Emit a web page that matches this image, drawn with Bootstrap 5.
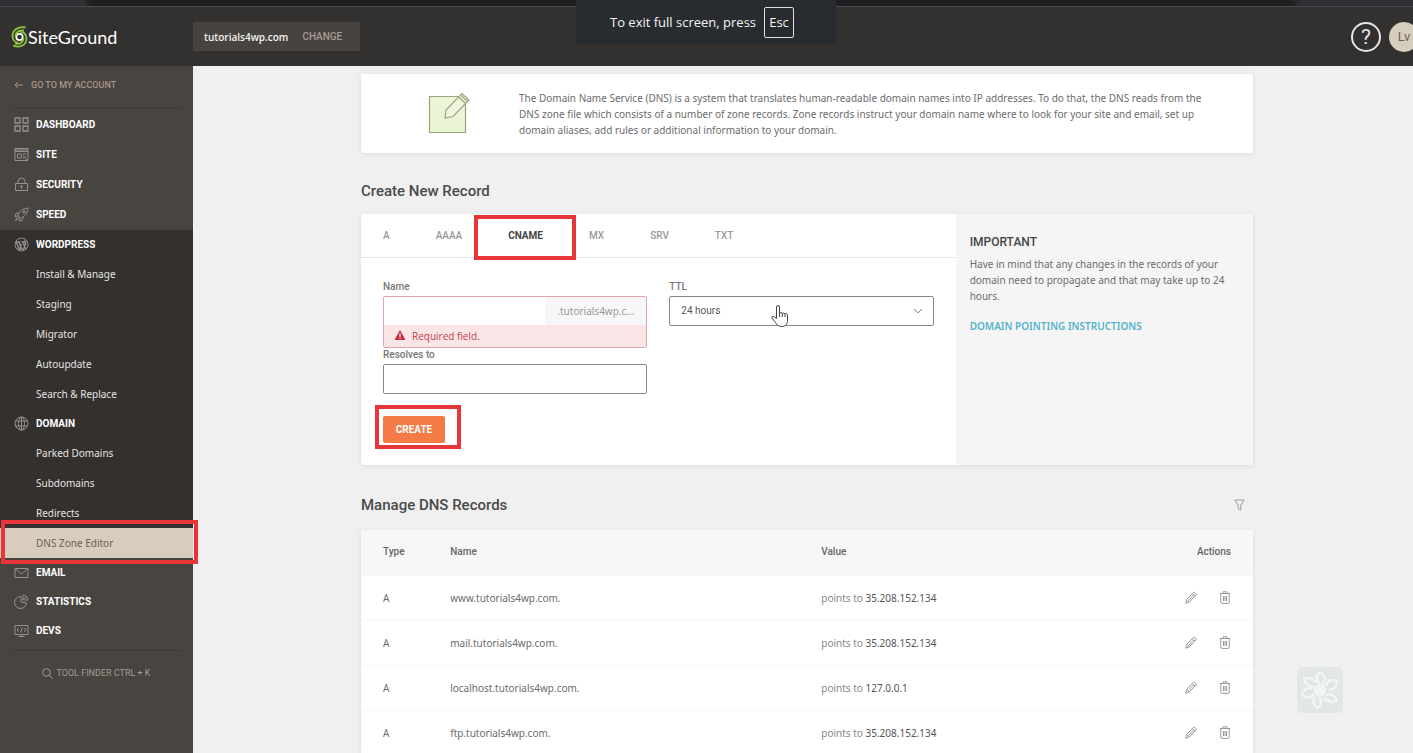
<!DOCTYPE html>
<html lang="en">
<head>
<meta charset="utf-8">
<meta name="viewport" content="width=device-width, initial-scale=1">
<title>DNS Zone Editor</title>
<link href="https://cdn.jsdelivr.net/npm/bootstrap@5.3.0/dist/css/bootstrap.min.css" rel="stylesheet">
<style>
  :root { --ui: Roboto, "Liberation Sans", sans-serif; --copy: "Noto Sans", "Open Sans", sans-serif; --mark-red: #e8353a; }
  body { font: 400 10px/16px var(--copy); color: #6c6c6c; background: #f0f0f0; }
  a { text-decoration: none; }
  svg { display: block; flex: none; fill: none; stroke: currentColor; }
  .strip { height: 7px; background: linear-gradient(90deg, #303135 0 84px, #1e1f20 90px calc(100% - 122px), #303135 calc(100% - 112px)); border-bottom: 1px solid #4b4b4d; }
  .topbar { height: 59px; background: #33312f; }
  .side { width: 193px; background: #484440; }
  .brand { width: 193px; padding-left: 11px; color: #fff; font: 400 18px/24px Lato, sans-serif; }
  .site-pick { height: 29px; padding: 0 18px 0 11px; gap: 14px; background: #474340; color: #f5f3f1; font: 600 10px/16px "Open Sans", sans-serif; }
  .site-pick button { font: 500 10px/16px var(--ui); color: #a39b95; }
  .help { width: 30px; height: 30px; border: 2px solid #e8e6e4; color: #e8e6e4; font: 400 21px/26px var(--ui); }
  .avatar { width: 30px; height: 30px; margin-right: -6px; background: #d6cdbd; color: #6b6257; font: 400 13px/30px var(--ui); }
  .toast-esc { top: 0; left: 576px; width: 260px; height: 44px; padding-right: 8px; background: #282c30; color: #f3f4f5; font: 400 13px/20px "Open Sans", sans-serif; z-index: 20; }
  .toast-esc kbd { width: 30px; height: 31px; border: 1px solid #dfe1e3; border-radius: 2px; background: none; padding: 0; font: 400 13px/29px "Open Sans", sans-serif; color: inherit; }
  .back { height: 37px; padding-left: 14px; color: #a8958c; font: 500 9px/36px var(--ui); }
  .rule { height: 1px; margin: 5px 12px 1px; background: #3e3a37; }
  .head { height: 29px; padding-left: 14px; gap: 7px; color: #fff; font: 700 10px/29px var(--ui); }
  .head svg { color: #98908a; }
  .head-group { gap: 1px; padding-bottom: 1px; }
  .open-group { background: #33302e; }
  .sub { height: 30px; padding-left: 36px; color: #e6e3e0; font: 400 10px/30px var(--copy); }
  .sub.current { background: #d8cdbc; color: #6a6055; position: relative; }
  .callout::after { content: ""; position: absolute; border: 4px solid var(--mark-red); z-index: 5; pointer-events: none; }
  .sub.current::after { inset: -8px -5px -6px 1px; }
  .finder { color: #a39b94; font: 400 9px/16px var(--ui); gap: 3px; padding-top: 13px; }
  .pane { padding: 8px 0 0 8px; scrollbar-width: none; }
  .wrap { max-width: 892px; margin: 0 auto; }
  .panel { background: #fff; border-radius: 2px; box-shadow: 0 1px 6px rgba(0,0,0,.08); }
  .intro { height: 79px; padding: 0 30px 0 66px; gap: 48px; }
  h2 { font: 500 15px/20px var(--ui); color: #4a4a4a; margin: 0; }
  .title-create { margin: 28px 0 13px; }
  .title-manage { margin: 30px 0 15px; }
  .tabs { height: 44px; border-bottom: 1px solid #e6e6e6; }
  .tabs button { border: 0; background: none; padding: 0 23px; font: 500 10px/43px var(--ui); color: #999; position: relative; }
  .tabs button:first-child { padding-left: 22px; }
  .tabs .active { color: #444; font-weight: 700; }
  .tabs .active::after { inset: 1px -10px -3px -11px; }
  .fields { padding: 22px; }
  .fields .row { --bs-gutter-x: 22px; }
  .fields label { display: block; height: 16px; font: 500 10px/13px var(--ui); color: #777; }
  .box { height: 30px; border: 1px solid #888; border-radius: 2px; font: 400 10px/16px var(--ui); color: #555; background-color: #fff; }
  .box.form-select { padding: 0 11px; background-image: url("data:image/svg+xml,%3csvg xmlns='http://www.w3.org/2000/svg' viewBox='0 0 16 16'%3e%3cpath fill='none' stroke='%23777' stroke-width='1.6' d='M2 5l6 6 6-6'/%3e%3c/svg%3e"); background-size: 10px; background-position: right 10px center; }
  .invalid-box { height: 52px; border: 1px solid #e0a5a8; border-radius: 2px; overflow: hidden; }
  .invalid-box input { height: 28px; border: 0; min-width: 0; outline: 0; }
  .suffix { width: 101px; padding-left: 12px; background: #f7f7f7; color: #999; font: 400 10px/28px var(--copy); }
  .error { height: 23px; padding-left: 10px; gap: 6px; background: #fbe6e7; color: #c43d50; font: 400 10px/22px "Open Sans", sans-serif; }
  .create { margin-top: 22px; width: 62px; height: 27px; border: 0; border-radius: 2px; background: #f47b45; color: #fff; font: 700 10px/27px var(--ui); position: relative; padding: 0; }
  .create::after { inset: -11px -16px -6px -8px; }
  .note { background: #f5f5f5; padding: 20px 14px; }
  .note h3 { font: 500 12px/16px var(--ui); color: #444; margin: 0 0 6px; }
  .note p { margin: 0 0 14px; }
  .note a { color: #55b3cb; font: 600 10px/16px var(--copy); }
  .pointer { position: absolute; left: 112px; top: 24px; z-index: 3; }
  .records { font: inherit; width: 100%; table-layout: fixed; }
  .records th { height: 45px; padding: 0; background: #f7f7f7; font: 500 10px/16px var(--ui); color: #666; }
  .records td { height: 45px; padding: 0; border-top: 1px solid #f6f6f6; }
  .records tr > :first-child { padding-left: 22px; width: 10%; }
  .records tr > :nth-child(2) { width: 41.6%; }
  .records tr > :last-child { padding-right: 22px; }
  .records td:nth-child(3) { color: #888; }
  .records button { border: 0; background: none; padding: 0; color: #999; }
  .records b { font-weight: 400; color: #555; }
  .actions { gap: 22px; }
  .stamp { right: 70px; bottom: 40px; width: 46px; height: 46px; border-radius: 5px; background: #e2e6e5; color: #f3f5f5; }
</style>
</head>
<body class="vh-100 overflow-hidden d-flex flex-column position-relative">
<div class="strip flex-shrink-0"></div>
<header class="topbar d-flex align-items-center flex-shrink-0">
  <a href="#" class="brand d-flex align-items-center">
    <svg width="17" height="22" viewBox="0 0 17 22"><circle cx="8.500" cy="11" r="3.200" stroke="#fff" stroke-width="1.800"/><path d="M14.500 1.500C7 0 1.500 4 1.500 10c0 4 2.500 6.500 5.500 6.800M13 4.500C8 4 4.500 6 4.300 10.500M2 19.500c7 3 13.500-.5 13.500-7C15.500 8.500 13 5.500 9 5.800M4 17.600c5 1.400 8.600-1.600 8.600-5.600" stroke="#8cc63f" stroke-width="1.800"/></svg>
    SiteGround</a>
  <div class="site-pick d-flex align-items-center"><span>tutorials4wp.com</span><button class="btn border-0 p-0">CHANGE</button></div>
  <div class="ms-auto d-flex gap-2">
    <a href="#" class="help rounded-circle text-center" aria-label="Help">?</a>
    <a href="#" class="avatar rounded-circle text-center">Lv</a>
  </div>
</header>
<div class="toast-esc position-absolute d-flex align-items-center justify-content-center gap-2"><span>To exit full screen, press</span><kbd class="text-center">Esc</kbd></div>

<div class="d-flex flex-grow-1 overflow-hidden">
  <nav class="side flex-shrink-0 position-relative z-1">
    <a href="#" class="back d-flex align-items-center"><svg class="me-2" width="9" height="8" viewBox="0 0 9 8"><path d="M9 4H1M4 1L1 4l3 3"/></svg>GO TO MY ACCOUNT</a>
    <div class="rule"></div>
    <div class="head-group d-flex flex-column">
      <a href="#" class="head d-flex align-items-center"><svg width="15" height="15" viewBox="0 0 15 15"><path d="M1 1h5v5H1zM9 1h5v5H9zM1 9h5v5H1zM9 9h5v5H9z" stroke-width="1.300"/></svg>DASHBOARD</a>
      <a href="#" class="head d-flex align-items-center"><svg width="15" height="15" viewBox="0 0 15 15"><path d="M1 1.500h13v12H1zM1 4.500h13M1 3h13M3.500 7h4v4h-4zM9 7h3.500M9 9l4 4M9 12l3-3"/></svg>SITE</a>
      <a href="#" class="head d-flex align-items-center"><svg width="15" height="15" viewBox="0 0 15 15"><path d="M1.500 6.500h12v7h-12zM4 6.500V4.500a3.500 3.500 0 0 1 7 0v2M7.500 9v3"/><circle cx="7.500" cy="9.300" r=".8"/></svg>SECURITY</a>
      <a href="#" class="head d-flex align-items-center"><svg width="15" height="15" viewBox="0 0 15 15"><path d="M4 9C5 4.500 8 1.500 14 1c-.3 6-3.500 9-8 10zM5 6L2 6.500.8 9.500l3-.5M9 10l-.5 3-3 1.200.5-3M3.500 10l-2 3.500 3.500-2"/><circle cx="10" cy="5" r="1.300"/></svg>SPEED</a>
    </div>
    <div class="open-group">
      <a href="#" class="head d-flex align-items-center"><svg width="15" height="15" viewBox="0 0 15 15"><circle cx="7.500" cy="7.500" r="6.500"/><path d="M2.300 5l3 8M5 5l3 8M9 5l2.500 7M5.500 13l2-6M9 13l2.500-6c.7-2-.5-3-1-3.500M2 5h4.500M7.800 5h3" stroke-width="1.400"/></svg>WORDPRESS</a>
      <a href="#" class="sub d-block">Install &amp; Manage</a>
      <a href="#" class="sub d-block">Staging</a>
      <a href="#" class="sub d-block">Migrator</a>
      <a href="#" class="sub d-block">Autoupdate</a>
      <a href="#" class="sub d-block">Search &amp; Replace</a>
      <a href="#" class="head d-flex align-items-center"><svg width="15" height="15" viewBox="0 0 15 15"><circle cx="7.500" cy="7.500" r="6.500"/><ellipse cx="7.500" cy="7.500" rx="3" ry="6.500"/><path d="M1.500 5h12M1.500 10h12M7.500 1v13"/></svg>DOMAIN</a>
      <a href="#" class="sub d-block">Parked Domains</a>
      <a href="#" class="sub d-block">Subdomains</a>
      <a href="#" class="sub d-block">Redirects</a>
      <a href="#" class="sub current callout d-block" aria-current="page">DNS Zone Editor</a>
    </div>
    <a href="#" class="head d-flex align-items-center"><svg width="15" height="15" viewBox="0 0 15 15"><path d="M1 3.500h13v9H1zM1.500 4l6 5 6-5"/></svg>EMAIL</a>
    <a href="#" class="head d-flex align-items-center"><svg width="15" height="15" viewBox="0 0 15 15"><path d="M7 2.500A6 6 0 1 0 12.500 9L7 8zM9 1v5h5a5 5 0 0 0-5-5zM9 6l3.500-3.500"/></svg>STATISTICS</a>
    <a href="#" class="head d-flex align-items-center"><svg width="15" height="15" viewBox="0 0 15 15"><path d="M1 2.500h13v9H1zM4.500 13.500h6M7.500 11.500v2M5 5L3 7l2 2M10 5l2 2-2 2M8.300 4.500l-1.600 5"/></svg>DEVS</a>
    <div class="rule"></div>
    <a href="#" class="finder d-flex align-items-center justify-content-center"><svg width="11" height="11" viewBox="0 0 11 11"><circle cx="4.500" cy="4.500" r="3.800"/><path d="M7.200 7.200L10.500 10.500"/></svg>TOOL FINDER CTRL + K</a>
  </nav>

  <main class="pane flex-grow-1 overflow-auto">
    <div class="wrap">
      <section class="panel intro d-flex align-items-center">
        <svg width="44" height="44" viewBox="0 0 44 44" stroke-width="1.200"><g stroke="#9aa683"><path d="M2.500 4.500h36v36h-36z" fill="#e9f5d3"/><path d="M18 26l1-8L35 1.500 42 8 26 24.500zM31.500 5l7 6.500M33.500 3l7 6.500" fill="#eef6de"/></g></svg>
        <p class="m-0">The Domain Name Service (DNS) is a system that translates human-readable domain names into IP addresses. To do that, the DNS reads from the DNS zone file which consists of a number of zone records. Zone records instruct your domain name where to look for your site and email, set up domain aliases, add rules or additional information to your domain.</p>
      </section>

      <h2 class="title-create">Create New Record</h2>
      <section class="panel row g-0">
        <div class="col-8">
          <div class="tabs d-flex" role="tablist">
            <button role="tab">A</button><button role="tab">AAAA</button><button role="tab" class="active callout" aria-selected="true">CNAME</button><button role="tab">MX</button><button role="tab">SRV</button><button role="tab">TXT</button>
          </div>
          <form class="fields" onsubmit="return false">
            <div class="row">
              <div class="col-6">
                <label for="rec-name">Name</label>
                <div class="invalid-box">
                  <div class="d-flex"><input id="rec-name" class="box flex-grow-1" type="text"><span class="suffix">.tutorials4wp.c...</span></div>
                  <div class="error d-flex"><svg class="mt-1" width="12" height="12" viewBox="0 0 12 12"><path d="M6 1l5.500 10H.5z" fill="#c4303f" stroke="none"/><path d="M6 4.500v3.500M6 9v1" stroke="#fff" stroke-width="1.200"/></svg>Required field.</div>
                </div>
                <label for="rec-target">Resolves to</label>
                <input id="rec-target" class="box w-100 d-block" type="text">
              </div>
              <div class="col-6 position-relative">
                <label for="rec-ttl">TTL</label>
                <select id="rec-ttl" class="box form-select"><option>24 hours</option></select>
                <svg class="pointer" width="20" height="24" viewBox="0 0 20 24"><path d="M6.500 14.500V3a1.500 1.500 0 0 1 3 0v6.500c0-1.300 2.800-1.300 2.800.3 0-1.200 2.700-1 2.700.5 0-1 2.500-.8 2.500 1V16c0 4-2 6.500-5.500 6.500-4 0-5-1.500-6.500-4L2 14c-.8-1.500.8-2.300 2-1.300zM9.500 9.500V13M12.300 10v3M15 10.500V13" fill="#fff" stroke="#444"/></svg>
              </div>
            </div>
            <button class="create callout" type="submit">CREATE</button>
          </form>
        </div>
        <aside class="note col-4">
          <h3>IMPORTANT</h3>
          <p>Have in mind that any changes in the records of your domain need to propagate and that may take up to 24 hours.</p>
          <a href="#">DOMAIN POINTING INSTRUCTIONS</a>
        </aside>
      </section>

      <div class="title-manage d-flex align-items-center justify-content-between pe-2">
        <h2>Manage DNS Records</h2>
        <a href="#" aria-label="Filter"><svg width="11" height="12" viewBox="0 0 11 12"><path d="M.8 1h9.400L6.800 6v5L4.200 9.500V6z" stroke="#999"/></svg></a>
      </div>
      <section class="panel overflow-hidden">
        <table class="records">
          <thead><tr><th>Type</th><th>Name</th><th>Value</th><th class="text-end">Actions</th></tr></thead>
          <tbody id="rows"></tbody>
        </table>
      </section>
    </div>
  </main>
</div>
<div class="stamp position-absolute d-flex align-items-center justify-content-center"><svg width="40" height="40" viewBox="0 0 40 40" stroke-width="2.500"><circle cx="20" cy="20" r="5" fill="currentColor"/><path d="M20 13c-5-3-4-8 0-11 4 3 7 7 2 12M26 16c1-6 6-7 11-5 0 5-3 9-8 9M26 25c6-2 9 1 11 5-5 3-9 2-13-2M19 27c4 4 2 8-1 11-4-2-7-6-3-11M14 24c-4 5-8 4-12 1 1-5 5-8 10-6M14 16C8 17 5 14 4 9c5-2 9-1 12 4"/></svg></div>

<template id="row">
  <tr><td>A</td><td></td><td>points to <b></b></td><td><div class="actions d-flex justify-content-end">
    <button aria-label="Edit"><svg width="12" height="13" viewBox="0 0 12 13"><path d="M.8 12.200l.8-3.700L8.500 1.300c.8-.8 3.400 1.500 2.600 2.500L4.300 11zM7.300 2.500l2.700 2.500M2 8.500L4.300 11M3.500 9.500l5-5.500"/></svg></button>
    <button aria-label="Delete"><svg width="12" height="13" viewBox="0 0 12 13"><path d="M.8 2.500h10.400M4 2.500V.8h4v1.700M1.800 2.500v8.700c0 .7.500 1.200 1.200 1.200h6c.7 0 1.200-.5 1.200-1.200V2.500M4.500 5v5M6 5v5M7.500 5v5"/></svg></button>
  </div></td></tr>
</template>
<script>
  [["www", "35.208.152.134"], ["mail", "35.208.152.134"], ["localhost", "127.0.0.1"], ["ftp", "35.208.152.134"]].forEach(([host, ip]) => {
    const row = document.getElementById("row").content.cloneNode(true);
    row.querySelectorAll("td")[1].textContent = host + ".tutorials4wp.com.";
    row.querySelector("b").textContent = ip;
    document.getElementById("rows").append(row);
  });
</script>
<script src="https://cdn.jsdelivr.net/npm/bootstrap@5.3.0/dist/js/bootstrap.bundle.min.js"></script>
</body>
</html>
